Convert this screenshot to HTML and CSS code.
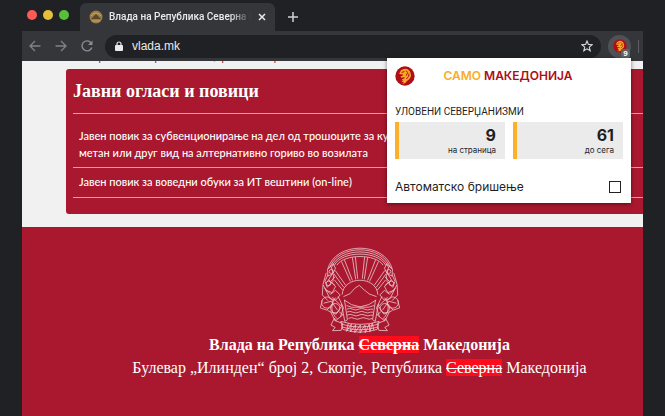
FILE: index.html
```html
<!DOCTYPE html>
<html lang="mk">
<head>
<meta charset="UTF-8">
<meta name="viewport" content="width=device-width, initial-scale=1.0">
<title>Само Македонија</title>
<link rel="stylesheet" href="styles.css">
</head>
<body>

<!-- lion logo, used in the toolbar and in the popup -->
<svg class="symbols" width="0" height="0">
  <symbol id="lion" viewBox="0 0 60 60">
    <circle cx="30" cy="30" r="29" fill="#b00d14"/>
    <path fill="#f9a825" d="M14 20 L18 13 L24 10 L31 8 L38 10 L44 15 L47 22 L48 30 L45 37 L40 42 L36 45 L31 51 L22 54 L27 47 L19 49 L25 43 L18 43 L25 38 L30 36 L27 34 L20 35 L16 32 L21 29 L25 28 L22 25 L16 25 L12 22 Z"/>
    <path fill="none" stroke="#b00d14" stroke-width="3" stroke-linecap="round" d="M21 19 L27 17 M34 15 L38 20 L34 28 M42 24 L41 31 L35 38"/>
  </symbol>
</svg>

<div class="browser">
  <div class="tab-bar">
    <div class="lights">
      <span class="light red"></span>
      <span class="light yellow"></span>
      <span class="light green"></span>
    </div>
    <div class="tab">
      <svg class="favicon" viewBox="0 0 14 14">
        <circle cx="7" cy="7" r="6.5" fill="#9b7c45"/>
        <path d="M2 9 L7 4 L12 9 Z" fill="#57482f"/>
        <path d="M2 6 Q7 0 12 6 M3 11 H11" fill="none" stroke="#c7a668"/>
      </svg>
      <span class="tab-title">Влада на Република Северна Македонија</span>
      <button class="icon-button" aria-label="Затвори">
        <svg width="10" height="10" viewBox="0 0 10 10"><path d="M2 2 L8 8 M8 2 L2 8" stroke="#e8eaed" stroke-width="1.5"/></svg>
      </button>
    </div>
    <button class="icon-button new-tab" aria-label="Нов таб">
      <svg width="12" height="12" viewBox="0 0 12 12"><path d="M6 1 V11 M1 6 H11" stroke="#d0d1d4" stroke-width="1.5"/></svg>
    </button>
  </div>

  <div class="toolbar">
    <div class="nav">
      <button class="icon-button" aria-label="Назад">
        <svg width="12" height="12" viewBox="0 0 12 12"><path d="M11.500 6 H1 M6 1 L1 6 L6 11" fill="none" stroke="#808286" stroke-width="1.3"/></svg>
      </button>
      <button class="icon-button" aria-label="Напред">
        <svg width="12" height="12" viewBox="0 0 12 12"><path d="M0.500 6 H11 M6 1 L11 6 L6 11" fill="none" stroke="#808286" stroke-width="1.3"/></svg>
      </button>
      <button class="icon-button" aria-label="Освежи">
        <svg width="12" height="12" viewBox="0 0 12 12"><path d="M10 2.800 A5 5 0 1 0 10.800 7.500" fill="none" stroke="#8b8d91" stroke-width="1.4"/><path d="M11.500 0.500 V5 H7 Z" fill="#8b8d91"/></svg>
      </button>
    </div>
    <div class="address">
      <svg width="8" height="10" viewBox="0 0 8 10"><rect x="0" y="4" width="8" height="6" rx="1" fill="#e8eaed"/><path d="M2 5 V3 A2 2 0 0 1 6 3 V5" fill="none" stroke="#e8eaed" stroke-width="1.2"/></svg>
      <input class="url" type="text" value="vlada.mk" aria-label="Адреса">
      <button class="icon-button" aria-label="Обележи">
        <svg width="12" height="12" viewBox="0 0 12 12"><path d="M6 1 L7.400 4.400 L11.200 4.700 L8.300 7.100 L9.200 10.800 L6 8.800 L2.800 10.800 L3.700 7.100 L0.800 4.700 L4.600 4.400 Z" fill="none" stroke="#d5d6d9" stroke-width="1.100"/></svg>
      </button>
    </div>
    <button class="extension" aria-label="Само Македонија">
      <svg width="14" height="14"><use href="#lion"/></svg>
      <span class="badge">9</span>
    </button>
    <span class="separator"></span>
  </div>

  <div class="viewport">
    <div class="page">
      <div class="previous"><span>за гранични премини и царински терминали</span></div>
      <div class="card">
        <h2>Јавни огласи и повици</h2>
        <ul>
          <li class="first">Јавен повик за субвенционирање на дел од трошоците за куповна на<br>метан или друг вид на алтернативно гориво во возилата</li>
          <li>Јавен повик за воведни обуки за ИТ вештини (on-line)</li>
        </ul>
      </div>
      <div class="footer">
        <svg class="emblem" viewBox="62 20 236 260" fill="none" stroke="#edc9cf" stroke-width="2.4">
          <path d="M82 88 C104 2 256 2 278 88"/>
          <path d="M88 84 C112 10 248 10 272 84"/>
          <path d="M95 80 C118 20 242 20 265 80"/>
          <path d="M102 76 C125 30 235 30 258 76"/>
          <path d="M110 75 C132 40 228 40 250 75"/>
          <!-- rays -->
          <path d="M157 52 L167 118 M166 50 L173 116 M194 50 L187 116 M203 52 L193 118 M124 64 L151 124 M133 59 L157 121 M236 64 L209 124 M227 59 L203 121 M105 91 L137 136 M101 101 L131 142 M255 91 L223 136 M259 101 L229 142 M103 120 L128 151 M257 120 L232 151"/>
          <path d="M126 164 C130 106 230 106 234 164"/>
          <!-- mountain and water -->
          <path d="M130 170 L150 161 L164 145 L178 136 L193 150 L208 162 L230 170 M132 180 L154 194 L180 201 L207 194 L229 180"/>
          <path d="M139 197 L154 202 H206 L222 197 M140 208 Q149 203 158 208 T176 208 T194 208 T212 208 H220 M140 217 Q149 212 158 217 T176 217 T194 217 T212 217 H220 M141 226 Q150 221 159 226 T177 226 T195 226 T213 226 H220 M145 236 Q154 231 163 236 T181 236 T199 236 T217 236"/>
          <path d="M133 180 L142 240 L134 245 L124 192 M227 180 L218 240 L226 245 L236 192"/>
          <!-- left wreath -->
          <path d="M98 70 L82 88 L83 108 L98 101 L106 84 Z M83 104 L74 124 L81 142 L98 124 L101 102 M78 98 L68 133 L66 165 L83 182 M86 120 L106 139 L96 158 L77 151 L69 135 M93 79 L98 98 L81 126 M105 110 L91 124 L105 137 M74 145 L91 163 L106 151 L120 165 L106 181 L89 176 Z"/>
          <circle cx="93" cy="94" r="6"/><circle cx="85" cy="130" r="7"/>
          <circle cx="81" cy="188" r="17"/><circle cx="105" cy="205" r="14"/>
          <path d="M66 181 L60 204 L80 211 L97 191 M96 171 L124 199 L108 223 L82 212 M114 170 L130 204 L121 231 M70 190 L93 184 L112 211 M91 216 L105 244 L128 225 L117 216 M106 173 C90 191 91 220 111 237"/>
          <!-- right wreath -->
          <g transform="translate(360 0) scale(-1 1)">
            <path d="M98 70 L82 88 L83 108 L98 101 L106 84 Z M83 104 L74 124 L81 142 L98 124 L101 102 M78 98 L68 133 L66 165 L83 182 M86 120 L106 139 L96 158 L77 151 L69 135 M93 79 L98 98 L81 126 M105 110 L91 124 L105 137 M74 145 L91 163 L106 151 L120 165 L106 181 L89 176 Z"/>
            <circle cx="93" cy="94" r="6"/><circle cx="85" cy="130" r="7"/>
            <circle cx="81" cy="188" r="17"/><circle cx="105" cy="205" r="14"/>
            <path d="M66 181 L60 204 L80 211 L97 191 M96 171 L124 199 L108 223 L82 212 M114 170 L130 204 L121 231 M70 190 L93 184 L112 211 M91 216 L105 244 L128 225 L117 216 M106 173 C90 191 91 220 111 237"/>
          </g>
          <!-- ribbon -->
          <path d="M103 235 L92 256 L105 263 L97 273 L123 272 L128 251 L108 244 Z M257 235 L268 256 L255 263 L263 273 L237 272 L232 251 L252 244 Z"/>
          <path d="M122 245 Q180 263 238 245 L232 269 Q180 286 128 269 Z M127 254 Q180 270 233 254 M126 262 Q180 279 234 262 M145 250 L139 275 L154 253 L151 277 L167 255 L164 279 L181 256 L180 280 L195 256 L196 279 L208 253 L210 276 L217 250 L222 272"/>
        </svg>
        <p class="name">Влада на Република <del>Северна</del> Македонија</p>
        <p>Булевар „Илинден“ број 2, Скопје, Република <del>Северна</del> Македонија</p>
      </div>
    </div>
  </div>

  <div class="popup">
    <div class="popup-header">
      <svg width="20" height="20"><use href="#lion"/></svg>
      <h1><span>САМО</span> МАКЕДОНИЈА</h1>
    </div>
    <h3>УЛОВЕНИ СЕВЕРЏАНИЗМИ</h3>
    <div class="stats">
      <div class="stat">
        <div class="number">9</div>
        <div class="label">на страница</div>
      </div>
      <div class="stat">
        <div class="number">61</div>
        <div class="label">до сега</div>
      </div>
    </div>
    <div class="option">
      <label for="auto">Автоматско бришење</label>
      <input type="checkbox" id="auto">
    </div>
  </div>
</div>

</body>
</html>
```
FILE: styles.css
```css
* {
  box-sizing: border-box;
}
body {
  margin: 0;
  padding: 0 22px;
  background-color: #202125;
  font-family: Inter, "Liberation Sans", sans-serif;
}
h1, h2, h3, p, ul {
  margin: 0;
  padding: 0;
}
.symbols {
  position: absolute;
}
.browser {
  position: relative;
  display: flex;
  flex-direction: column;
  height: 100vh;
}
.icon-button {
  display: flex;
  padding: 0;
  border: none;
  background: none;
  cursor: pointer;
}

/* tabs */
.tab-bar {
  display: flex;
  align-items: center;
  height: 31px;
  padding: 3px 5px 0;
}
.lights {
  display: flex;
  gap: 6px;
  width: 53px;
  padding-bottom: 5px;
}
.light {
  width: 10px;
  height: 10px;
  border-radius: 50%;
}
.red {
  background-color: #fc5b57;
}
.yellow {
  background-color: #e5bf3c;
}
.green {
  background-color: #57c038;
}
.tab {
  display: flex;
  align-items: center;
  gap: 6px;
  width: 195px;
  height: 28px;
  padding: 0 8px 0 9px;
  border-radius: 6px 6px 0 0;
  background-color: #35363a;
}
.favicon {
  flex: none;
  width: 14px;
  height: 14px;
}
.tab-title {
  flex: 1;
  overflow: hidden;
  white-space: nowrap;
  color: #e8eaed;
  font: 500 10px/14px Roboto, "Liberation Sans", sans-serif;
  -webkit-mask-image: linear-gradient(to right, #000 85%, transparent);
  mask-image: linear-gradient(to right, #000 85%, transparent);
}
.new-tab {
  margin-left: 12px;
}

/* toolbar */
.toolbar {
  display: flex;
  align-items: center;
  gap: 7px;
  height: 30px;
  padding: 0 4px 0 7px;
  background-color: #35363a;
}
.nav {
  display: flex;
  gap: 14px;
  width: 69px;
}
.address {
  flex: 1;
  display: flex;
  align-items: center;
  gap: 9px;
  height: 23px;
  padding: 0 8px 0 10px;
  border-radius: 12px;
  background-color: #202124;
}
.url {
  flex: 1;
  min-width: 0;
  padding: 0;
  border: none;
  outline: none;
  background: none;
  color: #e8eaed;
  font: 12px "Liberation Sans", sans-serif;
}
.extension {
  position: relative;
  display: flex;
  align-items: center;
  justify-content: center;
  width: 23px;
  height: 23px;
  padding: 0;
  border: none;
  border-radius: 50%;
  background-color: #505155;
}
.badge {
  position: absolute;
  right: 1px;
  bottom: 0;
  width: 9px;
  border-radius: 2px;
  background-color: #5f6368;
  color: #fff;
  font: bold 8px/9px "Liberation Sans", sans-serif;
}
.separator {
  width: 1px;
  height: 13px;
  background-color: #5f6064;
}

/* web page */
.viewport {
  flex: 1;
  overflow: hidden;
  background-color: #f1f1f1;
}
.page {
  display: flex;
  flex-direction: column;
  width: calc(100% + 54px);
  height: 100%;
}
.previous {
  display: flex;
  align-items: flex-start;
  height: 8px;
  padding-left: 57px;
  overflow: hidden;
  color: #a9182e;
  font: 11px/16px "Noto Sans", sans-serif;
}
.previous span {
  margin-top: -13px;
}
.card {
  margin: 0 44px 13px;
  padding: 9px 7px 16px;
  border-radius: 3px;
  background-color: #a9182e;
  color: #fff;
}
.card h2 {
  padding-bottom: 9px;
  border-bottom: 1px solid #dc9ea8;
  font: bold 18px/26px "Liberation Serif", serif;
}
.card ul {
  list-style: none;
}
.card li {
  padding: 5px 6px 7px;
  border-bottom: 1px solid #dc9ea8;
  font: 500 11px/17px Lato, "Noto Sans", sans-serif;
  white-space: nowrap;
}
.card .first {
  padding-top: 13px;
  padding-bottom: 6px;
}
.footer {
  flex: 1;
  padding-top: 20px;
  background-color: #a9182e;
  color: #fff;
  text-align: center;
  font: 16px/23px "Liberation Serif", serif;
}
.emblem {
  display: block;
  width: 80px;
  height: 86px;
  margin: 0 auto;
}
.name {
  font-weight: bold;
}
.footer del {
  background-color: #fd0d1b;
}

/* extension popup */
.popup {
  position: absolute;
  top: 58px;
  right: 12px;
  width: 244px;
  padding: 8px;
  background-color: #fff;
  box-shadow: 0 1px 4px rgba(0, 0, 0, 0.5);
  color: #1f1f1f;
}
.popup-header {
  display: flex;
  align-items: center;
}
.popup h1 {
  flex: 1;
  padding-right: 22px;
  text-align: center;
  color: #b00d14;
  font-size: 12px;
  font-weight: 600;
  line-height: 20px;
}
.popup h1 span {
  color: #f9ad2b;
}
.popup h3 {
  margin-top: 18px;
  font: 10px/16px Roboto, "Liberation Sans", sans-serif;
}
.stats {
  display: flex;
  gap: 8px;
  margin-top: 2px;
}
.stat {
  flex: 1;
  height: 37px;
  padding: 5px 9px;
  border-left: 4px solid #fdb02b;
  background-color: #ebebeb;
  text-align: right;
}
.number {
  font-size: 16px;
  font-weight: 700;
  line-height: 17px;
}
.label {
  font-size: 8px;
  line-height: 12px;
}
.option {
  display: flex;
  align-items: center;
  justify-content: space-between;
  margin-top: 20px;
  padding-right: 2px;
  font-size: 12px;
  line-height: 16px;
}
.option input {
  appearance: none;
  width: 12px;
  height: 12px;
  margin: 0;
  border: 1px solid #222;
}
```
